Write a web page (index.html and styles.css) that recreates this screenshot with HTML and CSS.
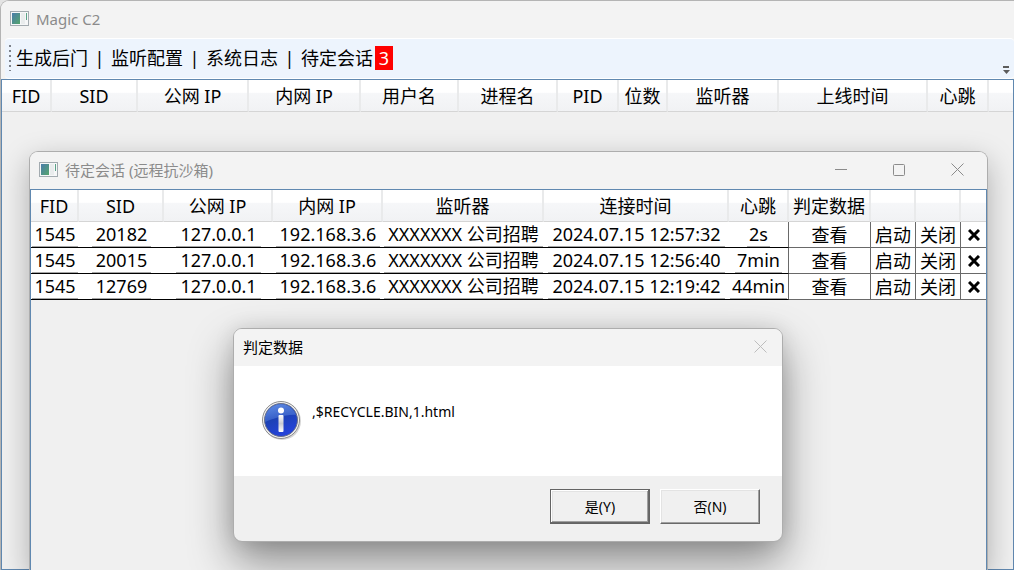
FILE: index.html
```
<!DOCTYPE html>
<html lang="zh-CN">
<head>
<meta charset="utf-8">
<title>Magic C2</title>
<link rel="stylesheet" href="styles.css">
</head>
<body>
<svg class="defs" width="0" height="0" aria-hidden="true">
  <defs>
    <linearGradient id="screen" x1="0" y1="0" x2="1" y2="1">
      <stop offset="0" stop-color="#4a7cab"/><stop offset="1" stop-color="#55a56c"/>
    </linearGradient>
    <symbol id="app-icon" viewBox="0 0 19 15">
      <rect x="0.5" y="0.5" width="18" height="14" fill="#f6f7f8" stroke="#a3abb0"/>
      <rect x="2" y="2" width="8" height="11" fill="url(#screen)"/>
      <rect x="11" y="2" width="4" height="11" fill="#e9eced"/>
      <rect x="16" y="2" width="1" height="7" fill="#5aa287"/>
    </symbol>
    <symbol id="close-icon" viewBox="0 0 13 13">
      <path d="M0.5 0.5L12.5 12.5M12.5 0.5L0.5 12.5" fill="none" stroke="currentColor"/>
    </symbol>
  </defs>
</svg>

<main class="app">
  <header class="titlebar">
    <svg class="app-icon" aria-hidden="true"><use href="#app-icon"/></svg>
    <h1 class="title">Magic C2</h1>
  </header>

  <nav class="toolbar">
    <span class="grip"></span>
    <button class="tool" type="button">生成后门</button><span class="bar">|</span>
    <button class="tool" type="button">监听配置</button><span class="bar">|</span>
    <button class="tool" type="button">系统日志</button><span class="bar">|</span>
    <button class="tool" type="button">待定会话</button><span class="count">3</span>
    <button class="overflow" type="button" aria-label="更多">
      <svg width="7" height="8" viewBox="0 0 7 8" aria-hidden="true"><path d="M0 0H6V2H0ZM0 4H7L3.5 8Z" fill="#5c5c5c"/></svg>
    </button>
  </nav>

  <section class="sessions">
    <table class="grid">
      <colgroup><col class="w50"><col class="w86"><col class="w111"><col class="w112"><col class="w98"><col class="w99"><col class="w61"><col class="w49"><col class="w111"><col class="w149"><col class="w61"><col></colgroup>
      <thead>
        <tr><th>FID</th><th>SID</th><th>公网 IP</th><th>内网 IP</th><th>用户名</th><th>进程名</th><th>PID</th><th>位数</th><th>监听器</th><th>上线时间</th><th>心跳</th><th></th></tr>
      </thead>
    </table>
  </section>
</main>

<section class="window pending">
  <header class="titlebar">
    <svg class="app-icon" aria-hidden="true"><use href="#app-icon"/></svg>
    <h2 class="title">待定会话 (远程抗沙箱)</h2>
    <div class="controls">
      <button type="button" aria-label="最小化"><svg width="13" height="13" viewBox="0 0 13 13"><path d="M0 6.5H12" stroke="currentColor"/></svg></button>
      <button type="button" aria-label="最大化"><svg width="13" height="13" viewBox="0 0 13 13"><rect x="0.5" y="1.5" width="11" height="11" rx="1" fill="none" stroke="currentColor"/></svg></button>
      <button type="button" aria-label="关闭"><svg width="13" height="13"><use href="#close-icon"/></svg></button>
    </div>
  </header>
  <div class="pending-body">
    <table class="grid rows">
      <colgroup><col class="w48"><col class="w85"><col class="w109"><col class="w110"><col><col class="w185"><col class="w60"><col class="w82"><col class="w45"><col class="w45"><col class="w25"></colgroup>
      <thead>
        <tr><th>FID</th><th>SID</th><th>公网 IP</th><th>内网 IP</th><th>监听器</th><th>连接时间</th><th>心跳</th><th>判定数据</th><th></th><th></th><th></th></tr>
      </thead>
      <tbody>
        <tr><td><span>1545</span></td><td><span>20182</span></td><td><span>127.0.0.1</span></td><td><span>192.168.3.6</span></td><td><span>XXXXXXX 公司招聘</span></td><td><span>2024.07.15 12:57:32</span></td><td><span>2s</span></td><td class="act"><button type="button">查看</button></td><td class="act"><button type="button">启动</button></td><td class="act"><button type="button">关闭</button></td><td class="act"><button type="button" aria-label="删除"><svg class="cross" viewBox="0 0 12 12"><path d="M1 1L11 11M11 1L1 11"/></svg></button></td></tr>
        <tr><td><span>1545</span></td><td><span>20015</span></td><td><span>127.0.0.1</span></td><td><span>192.168.3.6</span></td><td><span>XXXXXXX 公司招聘</span></td><td><span>2024.07.15 12:56:40</span></td><td><span>7min</span></td><td class="act"><button type="button">查看</button></td><td class="act"><button type="button">启动</button></td><td class="act"><button type="button">关闭</button></td><td class="act"><button type="button" aria-label="删除"><svg class="cross" viewBox="0 0 12 12"><path d="M1 1L11 11M11 1L1 11"/></svg></button></td></tr>
        <tr><td><span>1545</span></td><td><span>12769</span></td><td><span>127.0.0.1</span></td><td><span>192.168.3.6</span></td><td><span>XXXXXXX 公司招聘</span></td><td><span>2024.07.15 12:19:42</span></td><td><span>44min</span></td><td class="act"><button type="button">查看</button></td><td class="act"><button type="button">启动</button></td><td class="act"><button type="button">关闭</button></td><td class="act"><button type="button" aria-label="删除"><svg class="cross" viewBox="0 0 12 12"><path d="M1 1L11 11M11 1L1 11"/></svg></button></td></tr>
      </tbody>
    </table>
  </div>
</section>

<section class="window dialog" role="dialog" aria-labelledby="dialog-title">
  <header class="titlebar">
    <h2 class="title" id="dialog-title">判定数据</h2>
    <div class="controls">
      <button type="button" aria-label="关闭"><svg width="13" height="13"><use href="#close-icon"/></svg></button>
    </div>
  </header>
  <div class="message">
    <svg class="info" width="40" height="40" viewBox="0 0 40 40" aria-hidden="true">
      <defs>
        <linearGradient id="ball" x1="0" y1="0" x2="0.4" y2="1">
          <stop offset="0" stop-color="#4577dc"/><stop offset="0.5" stop-color="#1c41b4"/><stop offset="1" stop-color="#2443d8"/>
        </linearGradient>
        <linearGradient id="gloss" x1="0" y1="0" x2="0" y2="1">
          <stop offset="0" stop-color="#7ea6ef" stop-opacity="0.5"/><stop offset="1" stop-color="#5f8fea" stop-opacity="0.35"/>
        </linearGradient>
        <linearGradient id="stem" x1="0" y1="0" x2="0" y2="1">
          <stop offset="0" stop-color="#ffffff"/><stop offset="0.5" stop-color="#c9cbd3"/><stop offset="1" stop-color="#ffffff"/>
        </linearGradient>
      </defs>
      <circle cx="20" cy="20" r="19" fill="#b9b9b9" opacity="0.6"/>
      <circle cx="19" cy="19" r="18.5" fill="#f3f3f3" stroke="#8d8d8d"/>
      <circle cx="19" cy="19" r="16.5" fill="url(#ball)" stroke="#6c7289"/>
      <path d="M3 21A16 16 0 0 1 34 14C24 13 11 18 3 21Z" fill="url(#gloss)"/>
      <circle cx="19" cy="9.500" r="3" fill="#fff"/>
      <rect x="16.500" y="14" width="5" height="17" rx="1" fill="url(#stem)"/>
    </svg>
    <p>,$RECYCLE.BIN,1.html</p>
  </div>
  <footer class="actions">
    <button class="btn primary" type="button">是(Y)</button>
    <button class="btn" type="button">否(N)</button>
  </footer>
</section>
</body>
</html>
```
FILE: styles.css
```
* { box-sizing: border-box; }

body {
  margin: 0;
  position: relative;
  height: 100vh;
  overflow: hidden;
  background: #e3e3e3;
  color: #000;
  font: 18px/24px "Noto Sans", "Noto Sans CJK SC", sans-serif;
}

button {
  margin: 0;
  padding: 0;
  border: 0;
  background: none;
  color: inherit;
  font: inherit;
}

.defs { position: absolute; }

.app {
  display: flex;
  flex-direction: column;
  height: 100vh;
  border: solid #b4b4b4;
  border-width: 1px 0 0 1px;
  border-radius: 9px 0 0 0;
  background: #f3f3f3;
  overflow: hidden;
}

.titlebar {
  display: flex;
  align-items: center;
  height: 37px;
  padding: 0 0 2px 9px;
  background: #f3f3f3;
  color: #8b8b8b;
}

.app-icon {
  width: 19px;
  height: 15px;
  margin-right: 7px;
}

.title {
  margin: 0;
  font-size: 15px;
  font-weight: 400;
}

.toolbar {
  display: flex;
  align-items: center;
  height: 41px;
  margin-left: 4px;
  padding: 0 0 2px 4px;
  border-top: 1px solid #fff;
  border-bottom: 1px solid #fff;
  border-radius: 4px;
  background: #edf4fd;
}

.grip {
  width: 2px;
  height: 26px;
  margin-right: 5px;
  background: repeating-linear-gradient(#7d828a 0 2px, transparent 2px 5px);
}

.bar {
  width: 23px;
  text-align: center;
}

.count {
  width: 18px;
  margin-left: 2px;
  background: #f00;
  color: #fff;
  text-align: center;
}

.overflow {
  align-self: flex-end;
  display: flex;
  margin-left: auto;
  padding: 0 4px 2px;
}

.sessions {
  flex: 1;
  border: 1px solid #6088b0;
  background: #f0f0f0;
}

.grid {
  width: 100%;
  border-collapse: separate;
  border-spacing: 0;
  table-layout: fixed;
}

.grid th {
  height: 32px;
  padding: 0;
  border-right: 2px solid #e9eaeb;
  border-bottom: 1px solid #d5d5d5;
  background: linear-gradient(#fff 0 40%, #f6f7f9 42%, #f1f2f4);
  font-weight: 400;
  white-space: nowrap;
}

.grid th:last-child { border-right: 0; }

.w25 { width: 25px; }
.w45 { width: 45px; }
.w48 { width: 48px; }
.w49 { width: 49px; }
.w50 { width: 50px; }
.w60 { width: 60px; }
.w61 { width: 61px; }
.w82 { width: 82px; }
.w85 { width: 85px; }
.w86 { width: 86px; }
.w98 { width: 98px; }
.w99 { width: 99px; }
.w109 { width: 109px; }
.w110 { width: 110px; }
.w111 { width: 111px; }
.w112 { width: 112px; }
.w149 { width: 149px; }
.w185 { width: 185px; }

.rows td {
  height: 26px;
  padding: 0;
  border-bottom: 1px solid #000;
  background: #fff;
  text-align: center;
  vertical-align: bottom;
  white-space: nowrap;
}

.rows td span {
  display: inline-block;
  height: 25px;
  padding: 0 4px;
  border-bottom: 1px solid #a6a6a6;
  vertical-align: bottom;
}

.rows td:nth-child(1) span,
.rows td:nth-child(7) span { padding: 0 2px; }

.rows td:nth-child(n+7):not(:last-child) { border-right: 1px solid #696969; }

.rows td.act { border-bottom-color: #696969; }

.rows button {
  display: block;
  width: 100%;
  height: 25px;
}

.cross {
  display: block;
  width: 12px;
  height: 12px;
  margin: auto;
  fill: none;
  stroke: #000;
  stroke-width: 3;
}

.window {
  position: absolute;
  border: 1px solid #adadad;
  border-radius: 9px;
  background: #f0f0f0;
}

.window .titlebar { border-radius: 8px 8px 0 0; }

.controls {
  display: flex;
  margin-left: auto;
  padding-right: 1px;
}

.controls button {
  display: flex;
  align-items: center;
  justify-content: center;
  width: 58px;
  height: 35px;
}

.pending {
  top: 151px;
  left: 29px;
  right: 26px;
  bottom: 0;
  border-bottom: 0;
  border-radius: 9px 9px 0 0;
  box-shadow: 0 10px 30px rgba(0, 0, 0, 0.28);
}

.pending-body {
  height: calc(100% - 37px);
  border: 1px solid #6088b0;
  border-bottom: 0;
}

.dialog {
  top: 328px;
  left: 233px;
  width: 550px;
  box-shadow: 0 20px 44px rgba(0, 0, 0, 0.42), 0 0 20px rgba(0, 0, 0, 0.1);
}

.dialog .titlebar { color: #bdbdbd; }

.dialog .title { color: #000; }

.dialog .controls button { width: 42px; }

.message {
  display: flex;
  gap: 10px;
  height: 110px;
  padding: 35px 28px;
  background: #fff;
}

.message p {
  margin: 0;
  font-size: 14px;
  line-height: 22px;
}

.actions {
  display: flex;
  justify-content: flex-end;
  gap: 10px;
  padding: 13px 22px 17px;
}

.btn {
  width: 100px;
  height: 35px;
  border: 1px solid;
  border-color: #fff #696969 #696969 #fff;
  box-shadow: inset -1px -1px #a0a0a0, inset 1px 1px #e3e3e3;
  background: #f0f0f0;
  font-size: 14px;
}

.btn.primary {
  border-color: #646464;
  box-shadow: inset -1px -1px #696969, inset 1px 1px #fff, inset -2px -2px #a0a0a0, inset 2px 2px #e3e3e3;
}
```
